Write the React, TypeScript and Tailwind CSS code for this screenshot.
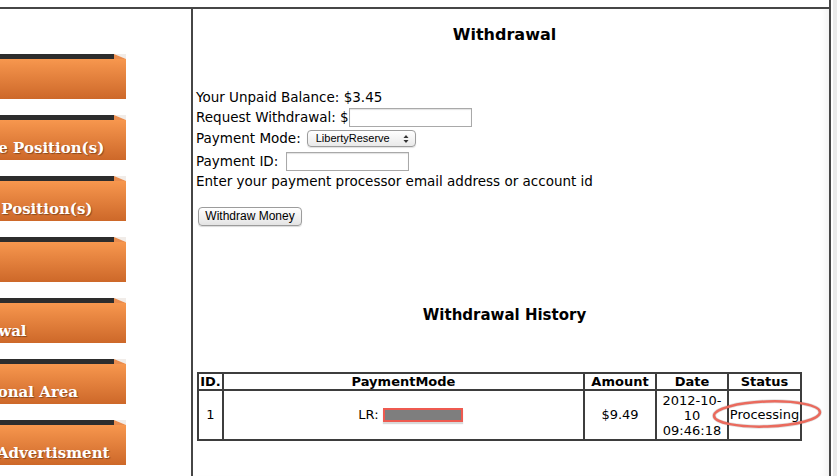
import React from 'react';

const navItems = [
  'Home',
  'Purchase Position(s)',
  'Current Position(s)',
  'Deposit',
  'Withdrawal',
  'Promotional Area',
  'Banner Advertisment',
];

const NavButton = ({ label }: { label: string }) => (
  <div className="w-[126px] h-[45px] flex flex-col">
    <div className="flex h-[5px]">
      <div className="w-[114px] bg-[#2d2d2d]"></div>
      <svg width="12" height="5" viewBox="0 0 12 5" className="block">
        <polygon points="0,0 12,0 12,5" fill="#f1ece8" />
        <polygon points="0,0 12,5 0,5" fill="#e98c4e" />
      </svg>
    </div>
    <div className="h-[40px] bg-linear-to-b from-[#f7974e] to-[#cd6829]">
      <div
        className="-ml-[70px] pt-[18px] leading-[20px] whitespace-nowrap text-white font-bold text-[15px] [text-shadow:1px_1px_1px_rgba(0,0,0,0.35)]"
        style={{ fontFamily: '"DejaVu Serif", Georgia, serif' }}
      >
        {label}
      </div>
    </div>
  </div>
);

const TextInput = ({ width }: { width: string }) => (
  <input
    type="text"
    className={`${width} h-[19px] border border-[#a9a9a9] bg-white shadow-[inset_0_1px_1px_rgba(0,0,0,0.12)] outline-none`}
  />
);

const App = () => {
  return (
    <div
      className="relative w-[837px] h-[476px] bg-white overflow-hidden flex text-[13px] text-black"
      style={{ fontFamily: '"DejaVu Sans", Verdana, sans-serif' }}
    >
      <div className="w-[831px] h-full border-r-2 border-[#464646] pt-[7px] flex flex-col">
        <div className="flex-1 flex border-t-2 border-[#464646]">
          {/* sidebar */}
          <div className="w-[191px] overflow-hidden pt-[45px] flex flex-col gap-[16px]">
            {navItems.map((item) => (
              <NavButton key={item} label={item} />
            ))}
          </div>

          {/* main content */}
          <div className="flex-1 border-l-2 border-[#464646] pl-[3px] shadow-[inset_-8px_0_8px_-6px_rgba(0,0,0,0.07)]">
            <div className="w-[617px]">
              <h2 className="mt-[16px] h-[20px] leading-[20px] text-center font-bold text-[16px]">Withdrawal</h2>

              <div className="mt-[44px] flex flex-col text-[13.5px]">
                <div className="h-[17px] flex items-center">Your Unpaid Balance: $3.45</div>
                <div className="h-[22px] flex items-center">
                  <span>Request Withdrawal: $</span>
                  <TextInput width="w-[123px]" />
                </div>
                <div className="h-[21px] flex items-center">
                  <span className="mr-[6px]">Payment Mode:</span>
                  <div
                    className="w-[109px] h-[17px] rounded-[4px] border border-[#9c9c9c] bg-linear-to-b from-white to-[#e9e9e9] shadow-[0_1px_1px_rgba(0,0,0,0.12)] flex items-center justify-between pl-[8px] pr-[6px] text-[11px]"
                    style={{ fontFamily: '"Liberation Sans", Arial, sans-serif' }}
                  >
                    <span>LibertyReserve</span>
                    <svg width="6" height="10" viewBox="0 0 6 10">
                      <polygon points="3,1 5.5,4 0.5,4" fill="#333" />
                      <polygon points="0.5,6 5.5,6 3,9" fill="#333" />
                    </svg>
                  </div>
                </div>
                <div className="h-[24px] flex items-center">
                  <span className="mr-[8px]">Payment ID:</span>
                  <TextInput width="w-[123px]" />
                </div>
                <div className="h-[16px] flex items-center">Enter your payment processor email address or account id</div>
                <div className="mt-[17px] h-[20px] flex items-center">
                  <button
                    type="button"
                    className="ml-[2px] w-[104px] h-[19px] rounded-[4px] border border-[#9c9c9c] bg-linear-to-b from-white to-[#e4e4e4] shadow-[0_1px_1px_rgba(0,0,0,0.15)] text-[12px] leading-none"
                    style={{ fontFamily: '"Liberation Sans", Arial, sans-serif' }}
                  >
                    Withdraw Money
                  </button>
                </div>
              </div>

              <h2 className="mt-[79px] h-[20px] leading-[20px] text-center font-bold text-[15px]">Withdrawal History</h2>

              <table className="mt-[47px] ml-[1px] w-[603px] table-fixed border-collapse border-2 border-[#3d3d3d]">
                <colgroup>
                  <col className="w-[25px]" />
                  <col className="w-[361px]" />
                  <col className="w-[72px]" />
                  <col className="w-[72px]" />
                  <col className="w-[73px]" />
                </colgroup>
                <thead>
                  <tr className="h-[17px]">
                    {['ID.', 'PaymentMode', 'Amount', 'Date', 'Status'].map((h) => (
                      <th key={h} className="border-2 border-[#3d3d3d] p-0 leading-[15px] font-bold text-center">
                        {h}
                      </th>
                    ))}
                  </tr>
                </thead>
                <tbody>
                  <tr className="h-[50px]">
                    <td className="border-2 border-[#3d3d3d] p-0 text-center align-middle">1</td>
                    <td className="border-2 border-[#3d3d3d] p-0 align-middle">
                      <div className="flex items-center justify-center pl-[14px]">
                        <span className="mr-[4px]">LR:</span>
                        <span className="w-[80px] h-[14px] border-2 border-[#ee5a50] bg-[#7e7e7e] shadow-[0_2px_1px_rgba(0,0,0,0.15)]"></span>
                      </div>
                    </td>
                    <td className="border-2 border-[#3d3d3d] p-0 text-center align-middle">$9.49</td>
                    <td className="border-2 border-[#3d3d3d] p-0 text-center align-middle leading-[15px]">
                      2012-10-
                      <br />
                      10
                      <br />
                      09:46:18
                    </td>
                    <td className="border-2 border-[#3d3d3d] p-0 text-center align-middle whitespace-nowrap">Processing</td>
                  </tr>
                </tbody>
              </table>
            </div>
          </div>
        </div>
      </div>

      {/* scrollbar strip */}
      <div className="w-[6px] h-full border-l-2 border-white bg-[#ebebeb]"></div>

      {/* annotation ellipse */}
      <svg
        className="absolute left-[710px] top-[398px] pointer-events-none"
        width="116"
        height="34"
        viewBox="0 0 116 34"
      >
        <ellipse
          cx="57"
          cy="16"
          rx="53"
          ry="12.5"
          fill="none"
          stroke="rgba(0,0,0,0.12)"
          strokeWidth="4"
          transform="rotate(-2 57 16)"
        />
        <ellipse
          cx="57"
          cy="16"
          rx="53"
          ry="12.5"
          fill="none"
          stroke="#ea6a5d"
          strokeWidth="2.5"
          transform="rotate(-2 57 16)"
        />
      </svg>
    </div>
  );
};

export default App;
